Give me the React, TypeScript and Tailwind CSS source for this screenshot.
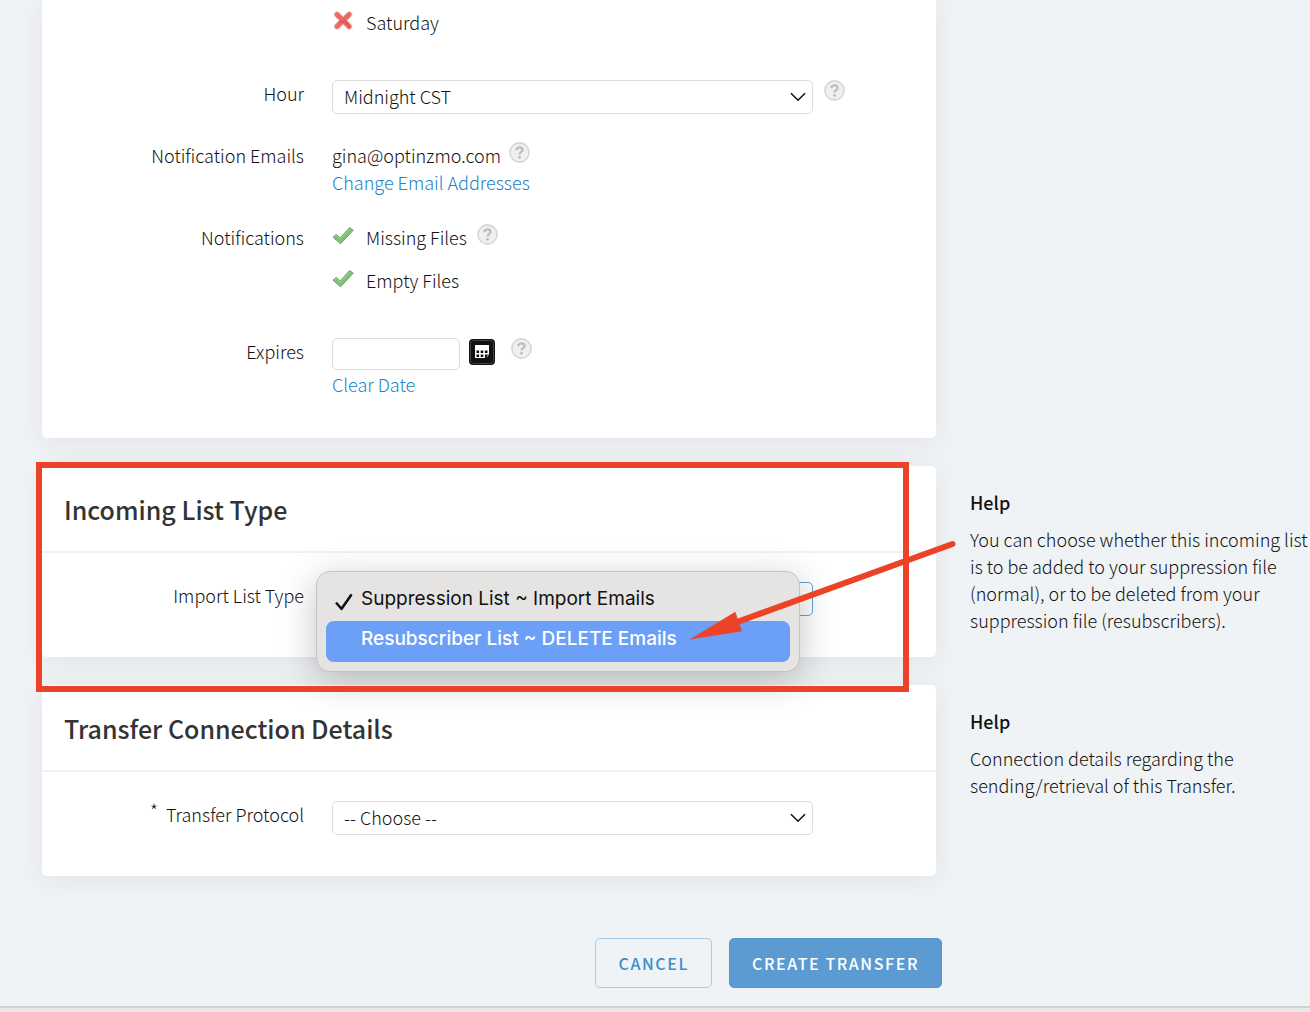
import { useId, useState } from "react";
import type { ReactNode } from "react";

function HelpIcon() {
  return (
    <button type="button" aria-label="Help" className="h-[21px] w-[21px] shrink-0">
      <svg viewBox="0 0 21 21" className="h-full w-full">
        <circle cx="10.5" cy="10.5" r="9.6" fill="#f0f0f0" stroke="#d6d6d6" strokeWidth="1.6" />
        <path d="M7.4 8.2C7.4 6.2 8.7 5.3 10.5 5.3s3.1 1 3.1 2.6c0 2.3-3.1 2.200-3.1 4.700" fill="none" stroke="#bdbdbd" strokeWidth="2.2" />
        <circle cx="10.5" cy="15.3" r="1.4" fill="#bdbdbd" />
      </svg>
    </button>
  );
}

function CrossIcon() {
  return (
    <svg viewBox="0 0 22 20" className="h-5 w-[22px]">
      <path d="M5 3.5 17.2 15.5M17.2 3.5 5 15.5" stroke="#f3c0bc" strokeWidth="6.2" strokeLinecap="round" />
      <path d="M5 3.5 17.2 15.5M17.2 3.5 5 15.5" stroke="#e96a64" strokeWidth="4.6" strokeLinecap="round" />
      <path d="M8 10.5h6l3.500 5.500" fill="none" stroke="#e5524c" strokeWidth="2" strokeLinecap="round" />
    </svg>
  );
}

function TickIcon() {
  return (
    <svg viewBox="0 0 22 20" className="h-5 w-[22px]">
      <path d="M1 11.2 4.2 8.4 8.2 11.8 17.6 1.6 21.2 4.2 8.6 17.8Z" fill="#7fc077" stroke="#6ba665" strokeWidth="1" strokeLinejoin="round" />
      <path d="M3 11 4.4 9.8 8.3 13.2 17.8 3" fill="none" stroke="#9bd492" strokeWidth="1" />
    </svg>
  );
}

function CalendarIcon() {
  return (
    <svg viewBox="0 0 26 26" className="h-[26px] w-[26px]">
      <rect width="26" height="26" rx="4" fill="#111" />
      <rect x="1.5" y="1.5" width="23" height="23" rx="3" fill="none" stroke="#444" strokeWidth="1" />
      <path d="M6 6h14v10l-3 3H6z" fill="#fff" />
      <path d="M7.5 11.5h2.600v2.600h-2.600zM11.700 11.500h2.600v2.600h-2.600zM15.900 11.500h2.600v2.600h-2.600zM7.500 15.400h2.600V18H7.500zM11.700 15.400h2.600V18h-2.600zM15.900 15.400h4v1.200h-2v2.400h-2z" fill="#111" />
    </svg>
  );
}

function Row({ label, htmlFor, required, children }: { label?: string; htmlFor?: string; required?: boolean; children: ReactNode }) {
  return (
    <div className="flex items-start gap-7">
      <div className="flex w-[262px] shrink-0 justify-end gap-2">
        {required && <span className="-mt-1">*</span>}
        {label && <label htmlFor={htmlFor}>{label}</label>}
      </div>
      <div className="min-w-0 flex-1">{children}</div>
    </div>
  );
}

function Select({ id, options, open }: { id: string; options: string[]; open?: boolean }) {
  return (
    <div className="relative w-full max-w-[481px]">
      <select
        id={id}
        className={`block h-[34px] w-full appearance-none rounded-[5px] border bg-white pb-[2px] pl-[11px] pr-10 outline-none ${
          open ? "border-[#5ba5d6]" : "border-[#dddddd]"
        }`}
      >
        {options.map((o) => (
          <option key={o}>{o}</option>
        ))}
      </select>
      <svg viewBox="0 0 16 10" className="pointer-events-none absolute right-[7px] top-3 h-[10px] w-4">
        <path d="M1 1.2 8 8.2 15 1.2" fill="none" stroke="#111" strokeWidth="1.6" />
      </svg>
      {open && (
        <ul
          role="listbox"
          className="absolute -left-4 -top-[11px] right-[13px] z-10 h-[101px] rounded-[14px] border border-[#c4c4c3] bg-[#e6e4e2] px-[9px] py-[9px] font-['Inter',sans-serif] text-[19px] font-normal text-[#111] shadow-[0_8px_36px_rgba(0,0,0,0.24)]"
        >
          <li role="option" aria-selected="true" className="flex h-10 items-center gap-2 pb-[5px] pl-[9px]">
            <svg viewBox="0 0 18 18" className="mt-[6px] h-[18px] w-[18px]">
              <path d="M1.8 10.5 6.6 15.8 16 2.2" fill="none" stroke="#111" strokeWidth="2.6" strokeLinecap="round" strokeLinejoin="round" />
            </svg>
            Suppression List ~ Import Emails
          </li>
          <li role="option" aria-selected="false" className="flex h-[41px] items-center rounded-lg bg-[#6b9ff8] pb-[5px] pl-[35px] font-medium text-white">
            Resubscriber List ~ DELETE Emails
          </li>
        </ul>
      )}
    </div>
  );
}

function CheckItem({ name, checked, help }: { name: string; checked?: boolean; help?: boolean }) {
  const id = useId();
  const [on, setOn] = useState(!!checked);

  return (
    <div className="mb-[17px] flex items-start gap-[10px]">
      <input id={id} type="checkbox" className="sr-only" checked={on} onChange={() => setOn(!on)} />
      <label htmlFor={id} className="flex">
        <span className="flex w-[34px] pt-[2px]">{on ? <TickIcon /> : <CrossIcon />}</span>
        {name}
      </label>
      {help && <HelpIcon />}
    </div>
  );
}

function Section({ title, help, children }: { title: string; help: string; children: ReactNode }) {
  return (
    <div className="flex gap-[34px]">
      <section className="min-w-0 flex-1 rounded-[5px] bg-white shadow-[0_4px_28px_rgba(40,20,50,0.07)]">
        <h2 className="flex h-[87px] items-center border-b-2 border-[#f0f0f0] px-[22px] text-[25px] font-medium text-[#333]">{title}</h2>
        <div className="pb-[41px] pt-[29px]">{children}</div>
      </section>
      <aside className="w-[340px] shrink-0 pt-[23px]">
        <h3 className="mb-[11px] font-medium">Help</h3>
        <p className="leading-[27px]">{help}</p>
      </aside>
    </div>
  );
}

export default function App() {
  const [date, setDate] = useState("");

  return (
    <div className="min-h-screen overflow-hidden bg-[#f0f3f5] font-['Noto_Sans_CJK_SC',sans-serif] text-[18px] font-light leading-[26px] text-[#111]">
      <main className="flex flex-col gap-7 pl-[42px]">
        <div className="pr-[374px]">
          <section className="flex flex-col gap-7 rounded-b-[5px] bg-white pb-10 pt-[9px] shadow-[0_4px_28px_rgba(40,20,50,0.07)]">
            <Row>
              <CheckItem name="Saturday" />
            </Row>
            <Row label="Hour" htmlFor="hour">
              <div className="flex items-start gap-[11px]">
                <Select id="hour" options={["Midnight CST"]} />
                <HelpIcon />
              </div>
            </Row>
            <Row label="Notification Emails">
              <div className="flex items-start gap-2">
                <span>gina@optinzmo.com</span>
                <HelpIcon />
              </div>
              <a href="#emails" className="block leading-7 text-[#2082c8]">Change Email Addresses</a>
            </Row>
            <Row label="Notifications">
              <CheckItem name="Missing Files" checked help />
              <CheckItem name="Empty Files" checked />
            </Row>
            <Row label="Expires" htmlFor="expires">
              <div className="flex items-start">
                <input
                  id="expires"
                  type="text"
                  value={date}
                  onChange={(e) => setDate(e.target.value)}
                  className="h-8 w-32 rounded-[5px] border border-[#dddddd] bg-white px-2 outline-none"
                />
                <button type="button" aria-label="Pick a date" className="ml-[9px] mr-4 mt-px">
                  <CalendarIcon />
                </button>
                <HelpIcon />
              </div>
              <a href="#clear" className="block leading-7 text-[#2082c8]">Clear Date</a>
            </Row>
          </section>
        </div>

        <div className="relative z-10">
          <Section
            title="Incoming List Type"
            help="You can choose whether this incoming list is to be added to your suppression file (normal), or to be deleted from your suppression file (resubscribers)."
          >
            <Row label="Import List Type" htmlFor="list-type">
              <Select id="list-type" options={["Suppression List ~ Import Emails", "Resubscriber List ~ DELETE Emails"]} open />
            </Row>
          </Section>

          {/* red frame and arrow drawn over the section */}
          <div className="pointer-events-none absolute -bottom-[35px] -left-[6px] -top-1 right-[401px] z-20 border-[6px] border-[#eb4228]" />
          <svg viewBox="0 0 270 102" className="pointer-events-none absolute right-[352px] top-[73px] z-20 h-[102px] w-[270px]">
            <path d="M49 83 264.5 5" stroke="#eb4228" strokeWidth="6" strokeLinecap="round" />
            <path d="M1.5 100.5 47.3 72.7 54 92.3Z" fill="#eb4228" />
          </svg>
        </div>

        <Section title="Transfer Connection Details" help="Connection details regarding the sending/retrieval of this Transfer.">
          <Row label="Transfer Protocol" htmlFor="protocol" required>
            <Select id="protocol" options={["-- Choose --"]} />
          </Row>
        </Section>
      </main>

      <div className="flex justify-end gap-[17px] pb-[18px] pr-[368px] pt-[62px] text-[16px] font-medium tracking-widest">
        <button type="button" className="h-[50px] rounded-[5px] border border-[#a9cbe5] px-[22px] text-[#3a8fca]">CANCEL</button>
        <button type="button" className="h-[50px] rounded-[5px] border border-[#4f97d1] bg-[#5b9bd1] px-[22px] text-white">CREATE TRANSFER</button>
      </div>
      <footer className="h-2 border-t-2 border-[#d0d0cf] bg-[#e8e8e6]" />
    </div>
  );
}
